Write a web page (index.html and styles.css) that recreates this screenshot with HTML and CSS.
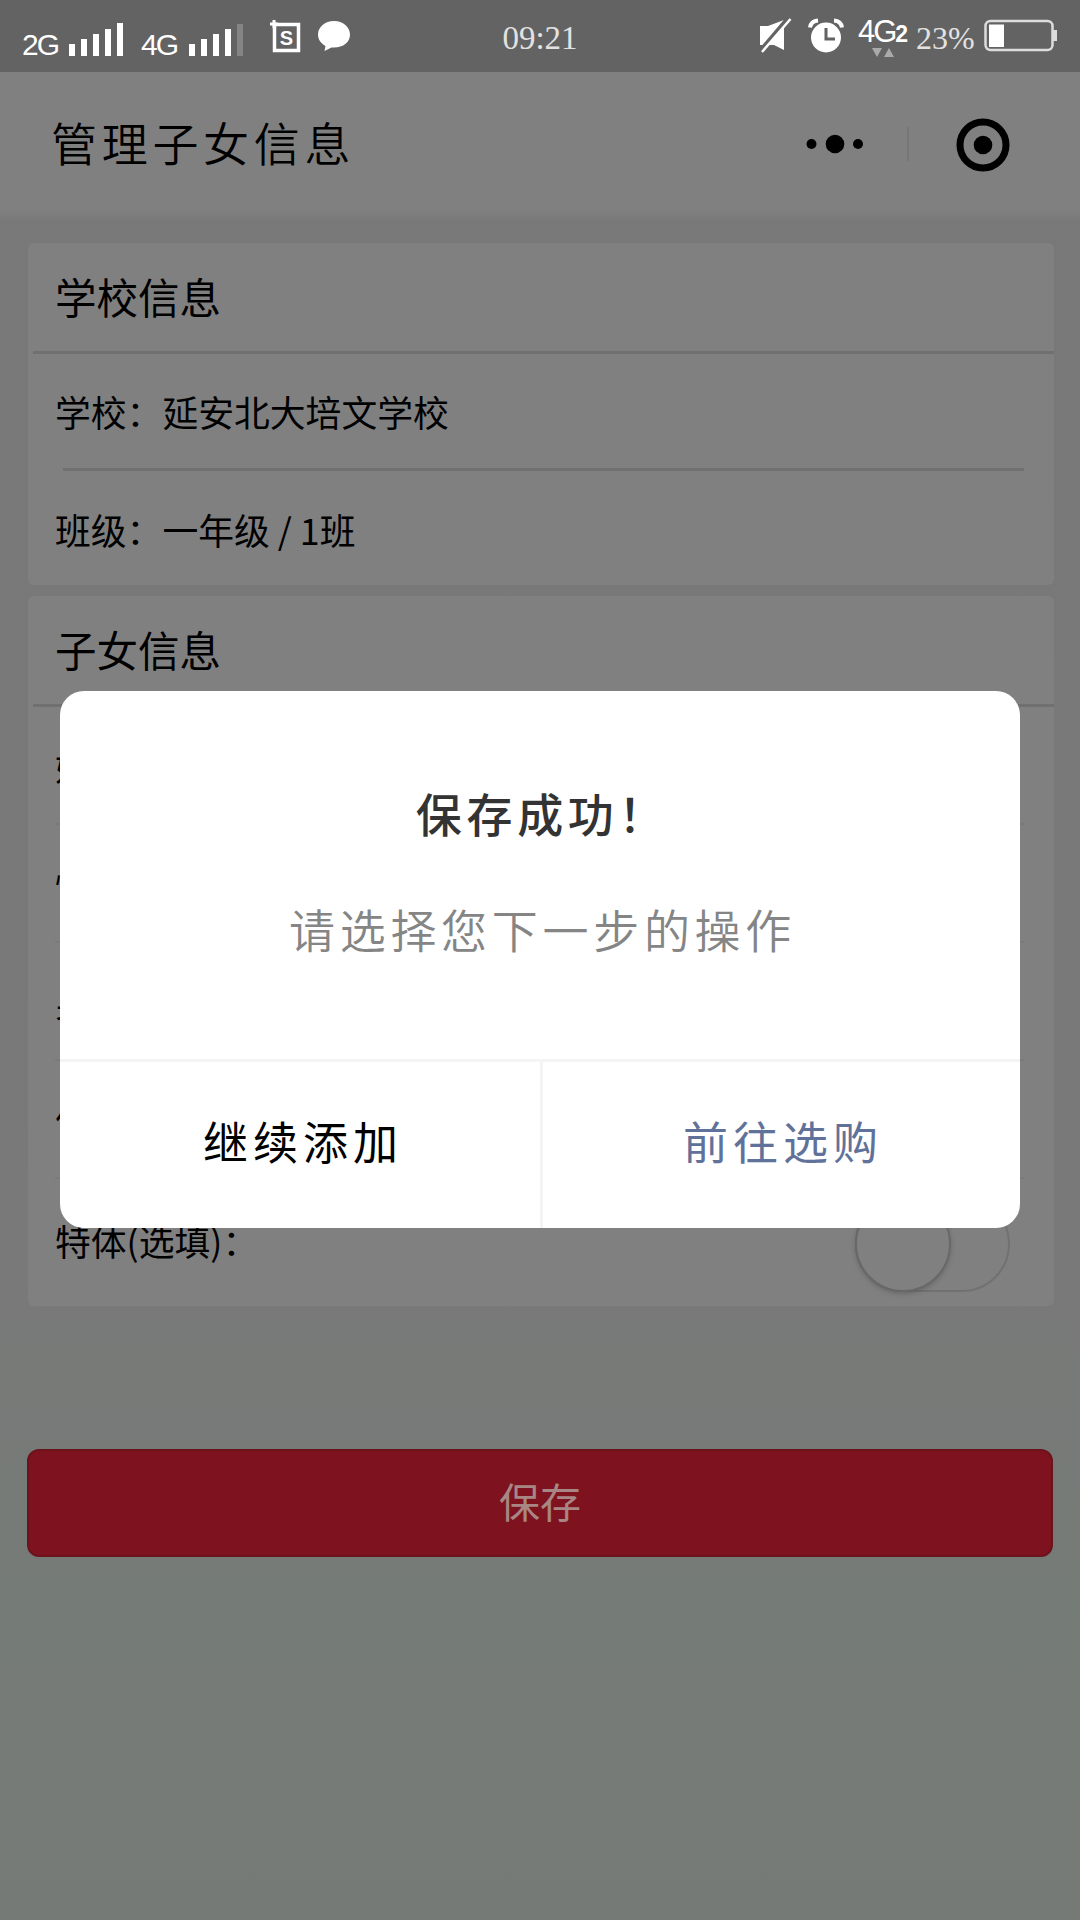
FILE: index.html
```html
<!DOCTYPE html>
<html lang="zh-CN">
<head>
<meta charset="utf-8">
<title>管理子女信息</title>
<link rel="stylesheet" href="styles.css">
</head>
<body>
<div class="phone">
  <header class="status">
    <div class="status-left">
      <span class="net">2G</span>
      <svg class="signal" width="58" height="36" viewBox="0 0 58 36"><path d="M0 23h6v12H0zM12 18h6v17h-6zM24 13h6v22h-6zM36 8h6v27h-6zM48 2h6v33h-6z" fill="#fff"/></svg>
      <span class="net net-4g">4G</span>
      <svg class="signal" width="58" height="36" viewBox="0 0 58 36"><path d="M0 23h6v12H0zM12 18h6v17h-6zM24 13h6v22h-6zM36 8h6v27h-6z" fill="#fff"/><path d="M48 3h6v32h-6z" fill="#858585"/></svg>
      <svg class="s-icon" width="32" height="34" viewBox="0 0 32 34"><path d="M4.500 4.500h24v26h-24z" fill="none" stroke="#fff" stroke-width="3.500"/><path d="M0 4h8M4 0v8" stroke="#fff" stroke-width="3"/><text x="16.500" y="25" text-anchor="middle" class="s-letter">S</text></svg>
      <svg class="bubble" width="34" height="32" viewBox="0 0 34 32"><path d="M17 1C8 1 1 7 1 14.500c0 5 3 9 7.500 11.500L7.500 31l7-3.500c11 1 18.500-5 18.500-13C33 7 26 1 17 1z" fill="#fff"/></svg>
    </div>
    <time class="clock">09:21</time>
    <div class="status-right">
      <svg width="34" height="36" viewBox="0 0 34 36"><path d="M1 8h8L25 2v30l-10-5H1z" fill="#fff"/><path d="M29 0 1 33" stroke="#636363" stroke-width="4"/><path d="M31.500 1 3 34" stroke="#fff" stroke-width="2.500"/></svg>
      <svg class="alarm" width="36" height="36" viewBox="0 0 36 36"><circle cx="18" cy="19.500" r="15" fill="#fff"/><path d="M2 9.500Q3 3 10 2.500M34 9.500Q33 3 26 2.500" stroke="#fff" stroke-width="4" fill="none"/><path d="M18 10v11h9" fill="none" stroke="#636363" stroke-width="3"/></svg>
      <div class="data">
        <div class="data-label">4G<b>2</b></div>
        <svg width="22" height="10" viewBox="0 0 22 10"><path d="M0 0h10L5 9zM12 9h10L17 0z" fill="#aaa"/></svg>
      </div>
      <span class="percent">23%</span>
      <svg width="74" height="34" viewBox="0 0 74 34"><rect x="1.500" y="3" width="67" height="29" rx="5" fill="none" stroke="#ddd" stroke-width="2.500"/><path d="M5 6.500h15V29H5z" fill="#fff"/><path d="M69 12h4v11h-4z" fill="#ddd"/></svg>
    </div>
  </header>

  <nav class="nav">
    <h1 class="nav-title">管理子女信息</h1>
    <div class="capsule">
      <svg width="58" height="20" viewBox="0 0 58 20"><circle cx="5.500" cy="10" r="5"/><circle cx="29" cy="10" r="9.300"/><circle cx="52" cy="10" r="5"/></svg>
      <i class="capsule-line"></i>
      <svg class="capsule-close" width="54" height="54" viewBox="0 0 54 54"><circle cx="27" cy="27" r="23" fill="none" stroke="#000" stroke-width="7"/><circle cx="27" cy="27" r="9.300"/></svg>
    </div>
  </nav>

  <main class="page">
    <section class="card school">
      <h2 class="card-title">学校信息</h2>
      <div class="row first">学校：延安北大培文学校</div>
      <div class="row last">班级：一年级 / 1班</div>
    </section>
    <section class="card child">
      <h2 class="card-title">子女信息</h2>
      <div class="row">姓名：</div>
      <div class="row">性别：</div>
      <div class="row">身高：</div>
      <div class="row">体重：</div>
      <div class="row last">特体(选填)：<span class="switch"><i class="knob"></i></span></div>
    </section>
    <button class="save">保存</button>
  </main>

  <div class="modal">
    <div class="modal-body">
      <div class="modal-title">保存成功！</div>
      <div class="modal-text">请选择您下一步的操作</div>
    </div>
    <div class="modal-actions">
      <div class="action">继续添加</div>
      <div class="action primary">前往选购</div>
    </div>
  </div>
</div>
</body>
</html>
```
FILE: styles.css
```css
* { box-sizing: border-box; }
body {
  margin: 0;
  font-family: "Noto Sans CJK SC", sans-serif;
}
svg { display: block; flex: none; }
.phone {
  position: relative;
  width: 1080px;
  height: 1920px;
  overflow: hidden;
  background: linear-gradient(#787878 0, #787978 1300px, #757b77 1600px, #757a77 1920px);
}

.status {
  height: 72px;
  display: grid;
  grid-template-columns: 1fr auto 1fr;
  padding: 0 22px;
  background: #636363;
  color: #fff;
}
.status-left, .status-right { display: flex; align-items: flex-start; }
.status-right { justify-content: flex-end; padding-top: 18px; }
.net {
  font: 30px/36px "Liberation Sans", sans-serif;
  width: 47px;
  margin-top: 27px;
  letter-spacing: -2px;
}
.signal { margin-top: 21px; }
.net-4g { margin-left: 14px; width: 48px; }
.s-icon { margin: 20px 0 0 23px; overflow: visible; }
.s-letter { font: bold 20px "Liberation Sans", sans-serif; fill: #fff; }
.bubble { margin: 20px 0 0 15px; }
.clock {
  font: 33px/36px "Liberation Serif", serif;
  padding-top: 20px;
  color: #e2e2e2;
}
.alarm { margin-left: 15px; }
.data {
  width: 50px;
  margin-left: 14px;
  display: flex;
  flex-direction: column;
  align-items: center;
}
.data-label {
  font: 31px/28px "Liberation Sans", sans-serif;
  letter-spacing: -2px;
  white-space: nowrap;
}
.data-label b { font-size: 23px; letter-spacing: 0; }
.percent {
  font: 32px/36px "Liberation Serif", serif;
  width: 59px;
  margin: 2px 9px 0 8px;
  color: #e2e2e2;
}

.nav {
  height: 150px;
  padding: 0 70px 6px 51px;
  display: flex;
  align-items: center;
  justify-content: space-between;
  background: linear-gradient(#808080 138px, #787878);
}
.nav-title {
  margin: 0;
  padding-bottom: 6px;
  font-family: KaiTi, STKaiti, "Noto Sans CJK SC", sans-serif;
  font-size: 46px;
  font-weight: 350;
  letter-spacing: 4.700px;
}
.capsule { display: flex; align-items: center; }
.capsule-line {
  width: 2px;
  height: 34px;
  margin: 0 47px 0 43px;
  background: #767676;
}
.capsule-close { margin-top: 2px; }

.page { padding: 21px 26px 0 28px; }
.card { border-radius: 6px; background: #808080; }
.school { height: 342px; }
.child { height: 710px; margin-top: 11px; }
.card-title {
  height: 111px;
  margin: 0 0 0 5px;
  padding-left: 22px;
  border-bottom: 3px solid #707070;
  font-size: 41.500px;
  font-weight: 400;
  line-height: 107px;
}
.row {
  height: 118px;
  margin: 0 30px 0 27px;
  display: flex;
  align-items: center;
  justify-content: space-between;
  font-size: 35.800px;
  border-bottom: 2px solid #7a7a7a;
}
.last { border: 0; }
.school .row { height: 116px; }
.school .first {
  height: 117px;
  padding-bottom: 3px;
  border: 0;
  background: linear-gradient(#707070, #707070) 8px 100% / 100% 3px no-repeat;
}
.child .last { height: 121px; }
.switch {
  width: 155px;
  height: 96px;
  margin: 8px 14px 0 0;
  border: 2px solid #717171;
  border-radius: 48px;
}
.knob {
  display: block;
  width: 96px;
  height: 96px;
  margin: -2px;
  border: 2px solid #686868;
  border-radius: 50%;
  background: #808080;
  box-shadow: 0 2px 5px rgba(0, 0, 0, .18);
}
.save {
  display: block;
  width: 1026px;
  height: 108px;
  margin: 143px 0 0 -1px;
  padding: 0 0 6px;
  border: 2px solid #6c141c;
  border-radius: 12px;
  background: #7e121e;
  color: #a88684;
  font: 41px "Noto Sans CJK SC", sans-serif;
}

.modal {
  position: absolute;
  left: 60px;
  top: 691px;
  width: 960px;
  height: 537px;
  display: flex;
  flex-direction: column;
  border-radius: 24px;
  background: #fff;
  text-align: center;
  font-family: KaiTi, STKaiti, "Noto Sans CJK SC", sans-serif;
}
.modal-body { height: 368px; padding-top: 86px; }
.modal-title {
  font-size: 46px;
  line-height: 70px;
  font-weight: 500;
  letter-spacing: 4.700px;
  padding-left: 5px;
  color: #333;
}
.modal-text {
  margin-top: 46px;
  font-size: 46px;
  line-height: 70px;
  font-weight: 350;
  letter-spacing: 4.700px;
  padding-left: 5px;
  color: #858585;
}
.modal-actions { flex: 1; display: flex; border-top: 3px solid #f4f4f4; }
.action {
  flex: 1;
  padding: 44px 0 0 6px;
  font-size: 45px;
  line-height: 70px;
  letter-spacing: 5px;
  color: #000;
}
.primary { border-left: 3px solid #f4f4f4; padding-left: 3px; color: #61729a; }
```
